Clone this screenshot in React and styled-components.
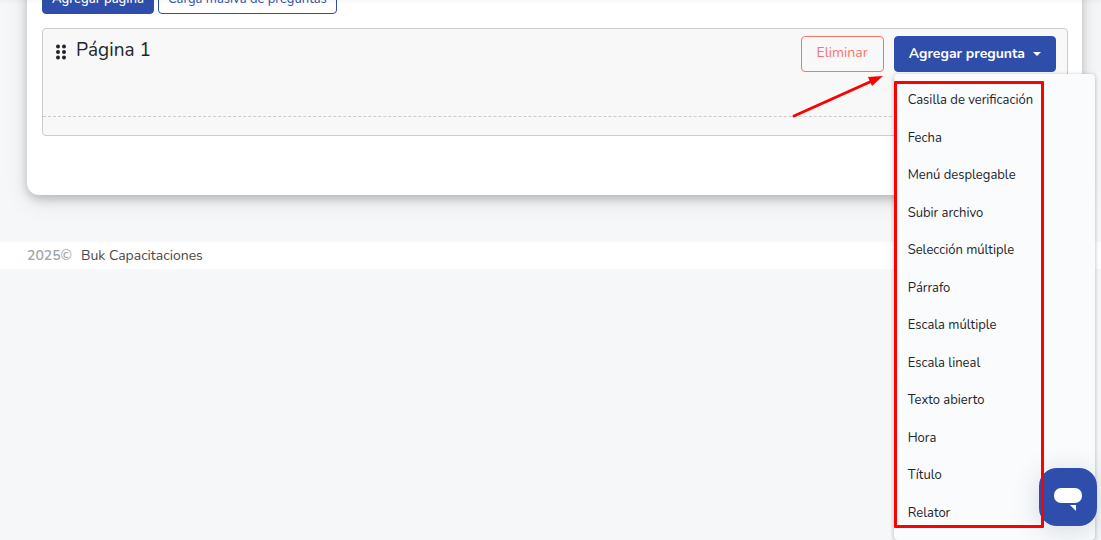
import { useState } from "react";
import styled, { createGlobalStyle, css } from "styled-components";

const GlobalStyle = createGlobalStyle`
  * {
    box-sizing: border-box;
  }

  body {
    margin: 0;
    background: #f5f7f9;
    color: #212529;
    font-family: Nunito, Lato, "Open Sans", sans-serif;
    font-size: 14px;
    line-height: 20px;
  }

  button {
    font-family: inherit;
    cursor: pointer;
  }
`;

const Page = styled.div`
  position: relative;
  min-height: 100vh;
  max-height: 100vh;
  overflow: hidden;
`;

const TopShade = styled.div`
  position: absolute;
  inset: 0 0 auto;
  height: 4px;
  background: linear-gradient(rgba(0, 0, 0, 0.03), transparent);
`;

const Card = styled.main`
  margin: -40px 19px 47px 27px;
  padding: 22px 14px 59px 15px;
  background: #fff;
  border-radius: 12px;
  box-shadow: 0 4px 10px rgba(0, 0, 0, 0.2), 0 6px 24px rgba(0, 0, 0, 0.1);
`;

const Toolbar = styled.div`
  display: flex;
  gap: 4px;
  margin-bottom: 14px;
`;

const Button = styled.button`
  display: inline-flex;
  align-items: center;
  justify-content: center;
  border: 1px solid #2f4dab;
  border-radius: 4px;
  padding: 0 14px;
  height: 36px;
  font-size: 14px;
  line-height: 20px;
  background: transparent;
  color: #2f4dab;

  ${(props) =>
    props.$variant === "primary" &&
    css`
      background: #2f4dab;
      color: #fff;
      font-weight: 700;
    `}

  ${(props) =>
    props.$variant === "danger" &&
    css`
      border-color: #fd7268;
      color: #fd7268;
      padding: 0 15px 2px;
    `}

  ${(props) =>
    props.$small &&
    css`
      height: 32px;
      padding: 2px 9px 0;
      font-size: 13px;
      font-weight: ${props.$variant === "primary" ? 600 : 400};
    `}
`;

const Panel = styled.section`
  background: #f8f8f8;
  border: 1px solid #ccc;
  border-radius: 4px;
  padding-bottom: 18px;
`;

const PanelHeader = styled.header`
  display: flex;
  align-items: flex-start;
  min-height: 88px;
  padding: 7px 11px 0 13px;
  border-bottom: 1px dashed #ccc;
`;

const DragHandle = styled.svg`
  margin: 8px 10px 0 0;
`;

const PanelTitle = styled.h2`
  margin: 0;
  font-size: 19px;
  font-weight: 400;
  line-height: 28px;
`;

const Actions = styled.div`
  display: flex;
  gap: 10px;
  margin-left: auto;
`;

const Dropdown = styled.div`
  position: relative;
`;

const Caret = styled.svg`
  margin-left: 8px;
`;

const Menu = styled.ul`
  position: absolute;
  z-index: 10;
  top: 38px;
  left: 0;
  width: 201px;
  margin: 0;
  padding: 8px 0;
  list-style: none;
  background: #fafbfd;
  border-radius: 4px;
  box-shadow: 0 1px 4px rgba(0, 0, 0, 0.28);
`;

const MenuItem = styled.button`
  display: block;
  width: 100%;
  padding: 9px 14px;
  border: 0;
  background: transparent;
  color: #212529;
  font-size: 13px;
  line-height: 1.5;
  text-align: left;

  &:hover {
    background: #eef1f7;
  }
`;

const Highlight = styled.div`
  position: absolute;
  z-index: 30;
  top: 45px;
  left: 0;
  width: 150px;
  height: 447px;
  border: 3px solid #fe0000;
  border-radius: 1px;
  pointer-events: none;
`;

const Arrow = styled.svg`
  position: absolute;
  z-index: 30;
  top: 38px;
  left: -102px;
  pointer-events: none;
`;

const Footer = styled.footer`
  display: flex;
  gap: 9px;
  padding: 4px 27px 3px;
  background: #fff;
`;

const Year = styled.span`
  color: #a2a3a7;
  font-weight: 600;
`;

const FooterLink = styled.a`
  color: #48494d;
  text-decoration: none;
`;

const ChatButton = styled.button`
  position: fixed;
  z-index: 20;
  right: 4px;
  bottom: 14px;
  width: 58px;
  height: 58px;
  padding: 0;
  border: 0;
  border-radius: 18px;
  background: #2f4dab;
  box-shadow: 0 4px 28px rgba(40, 70, 80, 0.18);

  svg {
    display: block;
  }
`;

const questionTypes = [
  "Casilla de verificación",
  "Fecha",
  "Menú desplegable",
  "Subir archivo",
  "Selección múltiple",
  "Párrafo",
  "Escala múltiple",
  "Escala lineal",
  "Texto abierto",
  "Hora",
  "Título",
  "Relator",
];

const QuestionDropdown = () => {
  const [isOpen, setIsOpen] = useState(true);

  return (
    <Dropdown>
      <Button $variant="primary" aria-expanded={isOpen} onClick={() => setIsOpen(!isOpen)}>
        Agregar pregunta
        <Caret width="8" height="4" viewBox="0 0 8 4" aria-hidden="true">
          <path d="M0 0h8L4 4z" fill="#fff" />
        </Caret>
      </Button>
      {isOpen && (
        <>
          <Menu>
            {questionTypes.map((type) => (
              <li key={type}>
                <MenuItem>{type}</MenuItem>
              </li>
            ))}
          </Menu>
          <Highlight />
          <Arrow width="94" height="46" viewBox="0 0 94 46" aria-hidden="true">
            <path d="M2 42L80 7" stroke="#fe0000" strokeWidth="3" strokeLinecap="round" />
            <path d="M91 2L80 12L76 3z" fill="#fe0000" />
          </Arrow>
        </>
      )}
    </Dropdown>
  );
};

const App = () => {
  return (
    <Page>
      <GlobalStyle />
      <Card>
        <Toolbar>
          <Button $small $variant="primary">Agregar página</Button>
          <Button $small>Carga masiva de preguntas</Button>
        </Toolbar>
        <Panel>
          <PanelHeader>
            <DragHandle width="10" height="16" viewBox="0 0 10 16" fill="#212529" aria-hidden="true">
              <circle cx="2" cy="2.500" r="2" />
              <circle cx="8" cy="2.500" r="2" />
              <circle cx="2" cy="8" r="2" />
              <circle cx="8" cy="8" r="2" />
              <circle cx="2" cy="13.500" r="2" />
              <circle cx="8" cy="13.500" r="2" />
            </DragHandle>
            <PanelTitle>Página 1</PanelTitle>
            <Actions>
              <Button $variant="danger">Eliminar</Button>
              <QuestionDropdown />
            </Actions>
          </PanelHeader>
        </Panel>
      </Card>
      <Footer>
        <Year>2025©</Year>
        <FooterLink href="#">Buk Capacitaciones</FooterLink>
      </Footer>
      <ChatButton aria-label="Chat">
        <svg width="58" height="58" viewBox="0 0 58 58" fill="#fff" aria-hidden="true">
          <rect x="15" y="20" width="28" height="15" rx="7" />
          <path d="M31 37h6v6z" />
        </svg>
      </ChatButton>
      <TopShade />
    </Page>
  );
};

export default App;
